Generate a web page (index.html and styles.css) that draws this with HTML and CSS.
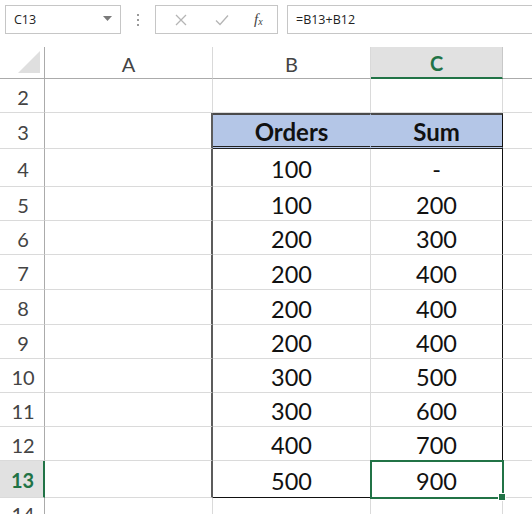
FILE: index.html
```html
<!DOCTYPE html>
<html>
<head>
<meta charset="utf-8">
<link rel="stylesheet" href="styles.css">
</head>
<body>
<div class="fbar">
  <div class="namebox"><span>C13</span><svg class="dd" width="9" height="5" viewBox="0 0 9 5"><path d="M0 0H9L4.5 5Z" fill="#7a7a7a"/></svg></div>
  <div class="dots"><i></i><i></i><i></i></div>
  <div class="btns">
    <svg width="14" height="14" viewBox="0 0 14 14"><path d="M2 2L12 12M12 2L2 12" stroke="#b5b5b5" stroke-width="1.3" fill="none"/></svg>
    <svg width="16" height="14" viewBox="0 0 16 14"><path d="M2 7.5L6 11.5L14 2.5" stroke="#b5b5b5" stroke-width="1.3" fill="none"/></svg>
    <span class="fx">f<sub>x</sub></span>
  </div>
  <div class="finput">=B13+B12</div>
</div>
<div class="sheet">
  <div class="corner"><svg width="26" height="26" viewBox="0 0 26 26"><path d="M24 2V24H2Z" fill="#dfdfdf"/></svg></div>
  <div class="ch">A</div><div class="ch">B</div><div class="ch sel">C</div><div class="ch last"></div>

  <div class="rh">2</div><div class="c"></div><div class="c"></div><div class="c"></div><div class="c last"></div>

  <div class="rh">3</div><div class="c pre"></div><div class="c th tb">Orders</div><div class="c th tc">Sum</div><div class="c last"></div>

  <div class="rh">4</div><div class="c pre"></div><div class="c tb">100</div><div class="c tc">-</div><div class="c last"></div>
  <div class="rh">5</div><div class="c pre"></div><div class="c tb">100</div><div class="c tc">200</div><div class="c last"></div>
  <div class="rh">6</div><div class="c pre"></div><div class="c tb">200</div><div class="c tc">300</div><div class="c last"></div>
  <div class="rh">7</div><div class="c pre"></div><div class="c tb">200</div><div class="c tc">400</div><div class="c last"></div>
  <div class="rh">8</div><div class="c pre"></div><div class="c tb">200</div><div class="c tc">400</div><div class="c last"></div>
  <div class="rh">9</div><div class="c pre"></div><div class="c tb">200</div><div class="c tc">400</div><div class="c last"></div>
  <div class="rh">10</div><div class="c pre"></div><div class="c tb">300</div><div class="c tc">500</div><div class="c last"></div>
  <div class="rh">11</div><div class="c pre"></div><div class="c tb">300</div><div class="c tc">600</div><div class="c last"></div>
  <div class="rh">12</div><div class="c pre"></div><div class="c tb">400</div><div class="c tc">700</div><div class="c last"></div>
  <div class="rh sel">13</div><div class="c pre"></div><div class="c tb bot">500</div><div class="c tc bot active">900<span class="handle"></span></div><div class="c last"></div>

  <div class="rh">14</div><div class="c"></div><div class="c"></div><div class="c"></div><div class="c last"></div>
</div>
</body>
</html>
```

FILE: styles.css
```css
* { box-sizing: border-box; }
html, body { margin: 0; padding: 0; background: #fff; }
body { width: 532px; height: 514px; overflow: hidden; font-family: "Open Sans", "Noto Sans", sans-serif; }

.fbar { height: 47px; display: flex; align-items: flex-start; padding-top: 5px; padding-left: 5px; }
.namebox { width: 116px; height: 29px; border: 1px solid #c6c6c6; display: flex; align-items: center; justify-content: space-between; padding: 0 8px 0 8px; font-size: 12.5px; color: #222; }
.namebox .dd { margin-top: -2px; }
.dots { width: 34px; height: 29px; display: flex; flex-direction: column; align-items: center; justify-content: center; gap: 3px; }
.dots i { display: block; width: 2px; height: 2px; background: #9a9a9a; }
.btns { width: 123px; height: 29px; border: 1px solid #c6c6c6; display: flex; align-items: center; padding-left: 18px; gap: 26px; }
.fx { font-family: "Liberation Serif", serif; font-style: italic; font-size: 15px; color: #444; margin-left: -2px; }
.fx sub { font-size: 10px; vertical-align: -1px; }
.finput { flex: 1; margin-left: 9px; height: 29px; border: 1px solid #c6c6c6; border-right: none; display: flex; align-items: center; padding-left: 8px; font-size: 12.5px; color: #222; }

.sheet {
  display: grid;
  grid-template-columns: 45px 168px 158px 132px 1fr;
  grid-template-rows: 32px 34px 36px 38px 34px 34px 35px 35px 34px 34px 34px 34px 37px 30px;
  font-family: "Lato", "Open Sans", sans-serif;
}
.corner { border-right: 1px solid #ababab; border-bottom: 1px solid #ababab; display: flex; align-items: flex-end; justify-content: flex-end; padding: 0 2px 3px 0; }
.ch { border-right: 1px solid #d9d9d9; border-bottom: 1px solid #ababab; display: flex; align-items: center; justify-content: center; font-size: 20px; color: #444; padding-top: 2px; }
.ch.sel { background: #e1e1e1; color: #217346; font-weight: bold; border-bottom: 2px solid #217346; border-right-color: #c8c8c8; }
.ch.last { border-right: none; }
.rh { border-right: 1px solid #ababab; border-bottom: 1px solid #dadada; display: flex; align-items: center; justify-content: center; font-size: 20px; color: #444; padding-left: 2px; padding-top: 2px; }
.rh.sel { background: #e1e1e1; color: #217346; font-weight: bold; border-right: 2px solid #217346; }

.c { border-right: 1px solid #dadada; border-bottom: 1px solid #dadada; display: flex; align-items: center; justify-content: center; font-size: 23.5px; color: #111; position: relative; padding-top: 3px; }
.c.last { border-right: none; }
.c.pre { border-right: 2px solid #5c5c5c; }
.c.tc { border-right: 1px solid #111; }
.c.th { background: #b4c6e7; font-weight: bold; font-size: 24px; padding-top: 1px; border-top: 2px solid #4a4a4a; border-bottom: 3px double #222; }
.c.th.tb { border-right-color: #b4c6e7; }
.c.bot { border-bottom: 1px solid #111; }
.c.active { outline: 2px solid #217346; outline-offset: -1px; z-index: 1; }
.handle { position: absolute; right: -4px; bottom: -4px; width: 6px; height: 6px; background: #217346; border: 1px solid #fff; box-sizing: content-box; z-index: 2; }
```
